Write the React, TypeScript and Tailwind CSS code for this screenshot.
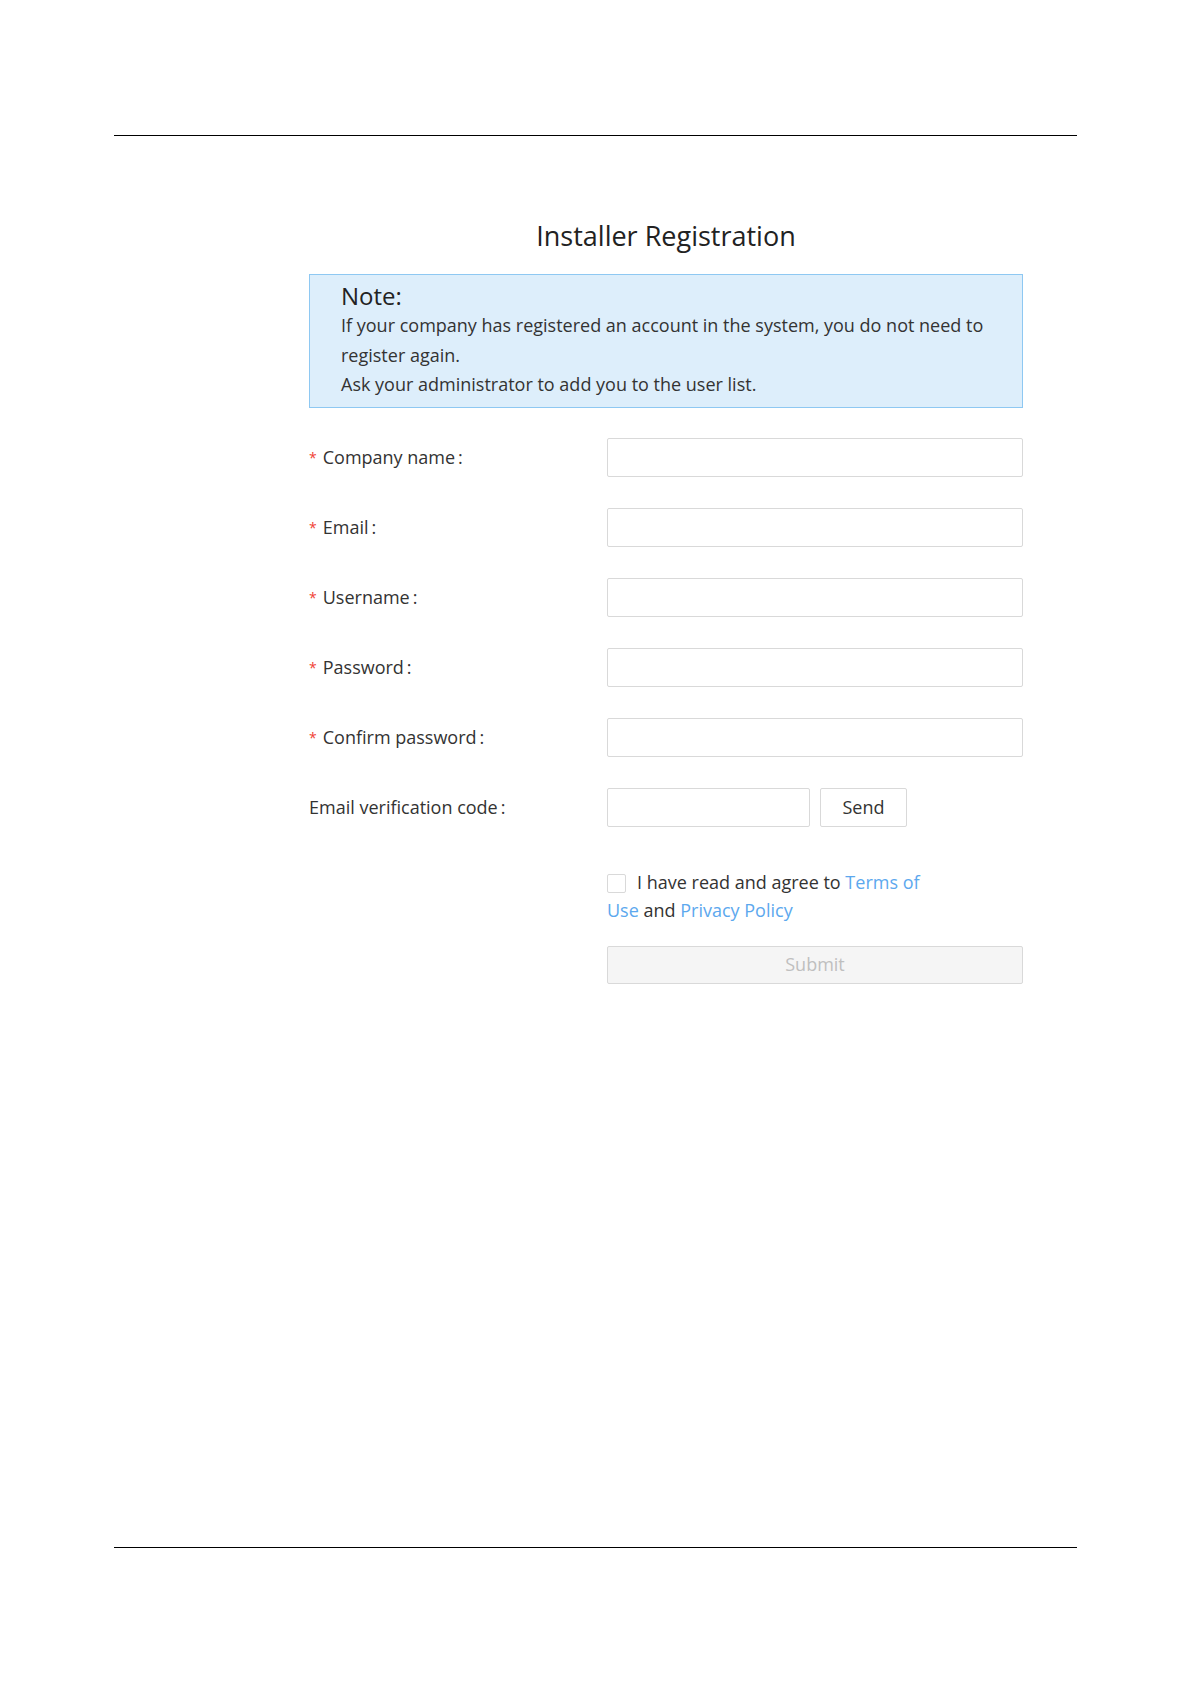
import React from "react";

const fields = [
  { label: "Company name", required: true },
  { label: "Email", required: true },
  { label: "Username", required: true },
  { label: "Password", required: true },
  { label: "Confirm password", required: true },
];

const App: React.FC = () => {
  return (
    <div
      className="w-[1191px] min-h-[1684px] bg-white text-[#333] flex flex-col"
      style={{ fontFamily: '"Open Sans", "Noto Sans", sans-serif' }}
    >
      <div className="mt-[135px] mx-[114px] h-px bg-black" />

      <div className="ml-[309px] w-[714px] flex flex-col">
        <h1 className="mt-[83px] text-center text-[27px] leading-[34px] text-[#222]">
          Installer Registration
        </h1>

        {/* note */}
        <div className="mt-[21px] border border-[#8ec8f2] bg-[#ddeefb] pl-[31px] pr-4 pt-[6px] pb-[7px]">
          <div className="text-[24px] leading-[30px] text-[#222]">Note:</div>
          <p className="text-[18px] leading-[29.5px] text-[#333]">
            If your company has registered an account in the system, you do not need to register again.
            <br />
            Ask your administrator to add you to the user list.
          </p>
        </div>

        <div className="mt-[30px] flex flex-col gap-[31px]">
          {fields.map((f) => (
            <div key={f.label} className="flex items-center">
              <label className="w-[298px] text-[18px] flex items-center">
                <span className="text-[#f04134] text-[14px] mr-[6px]">*</span>
                {f.label}
                <span className="ml-[3px]">:</span>
              </label>
              <input className="w-[416px] h-[39px] border border-[#d9d9d9] rounded-[2px] outline-none px-3" />
            </div>
          ))}

          <div className="flex items-center">
            <label className="w-[298px] text-[18px]">
              Email verification code<span className="ml-[3px]">:</span>
            </label>
            <input className="w-[203px] h-[39px] border border-[#d9d9d9] rounded-[2px] outline-none px-3" />
            <button className="ml-[10px] w-[87px] h-[39px] border border-[#d9d9d9] rounded-[2px] bg-white text-[18px] text-[#333]">
              Send
            </button>
          </div>
        </div>

        <div className="mt-[41px] ml-[298px] w-[326px] text-[18px] leading-[28px]">
          <span className="inline-block align-[-4px] w-[19px] h-[19px] border border-[#d9d9d9] rounded-[2px] mr-[11px]" />
          I have read and agree to <span className="text-[#5ca8ee]">Terms of</span>{" "}
          <span className="text-[#5ca8ee]">Use</span> and{" "}
          <span className="text-[#5ca8ee]">Privacy Policy</span>
        </div>

        <button className="mt-[22px] ml-[298px] w-[416px] h-[38px] border border-[#d9d9d9] rounded-[2px] bg-[#f5f5f5] text-[18px] text-[#bfbfbf]">
          Submit
        </button>
      </div>

      <div className="mt-[563px] mx-[114px] h-px bg-black" />
    </div>
  );
};

export default App;
